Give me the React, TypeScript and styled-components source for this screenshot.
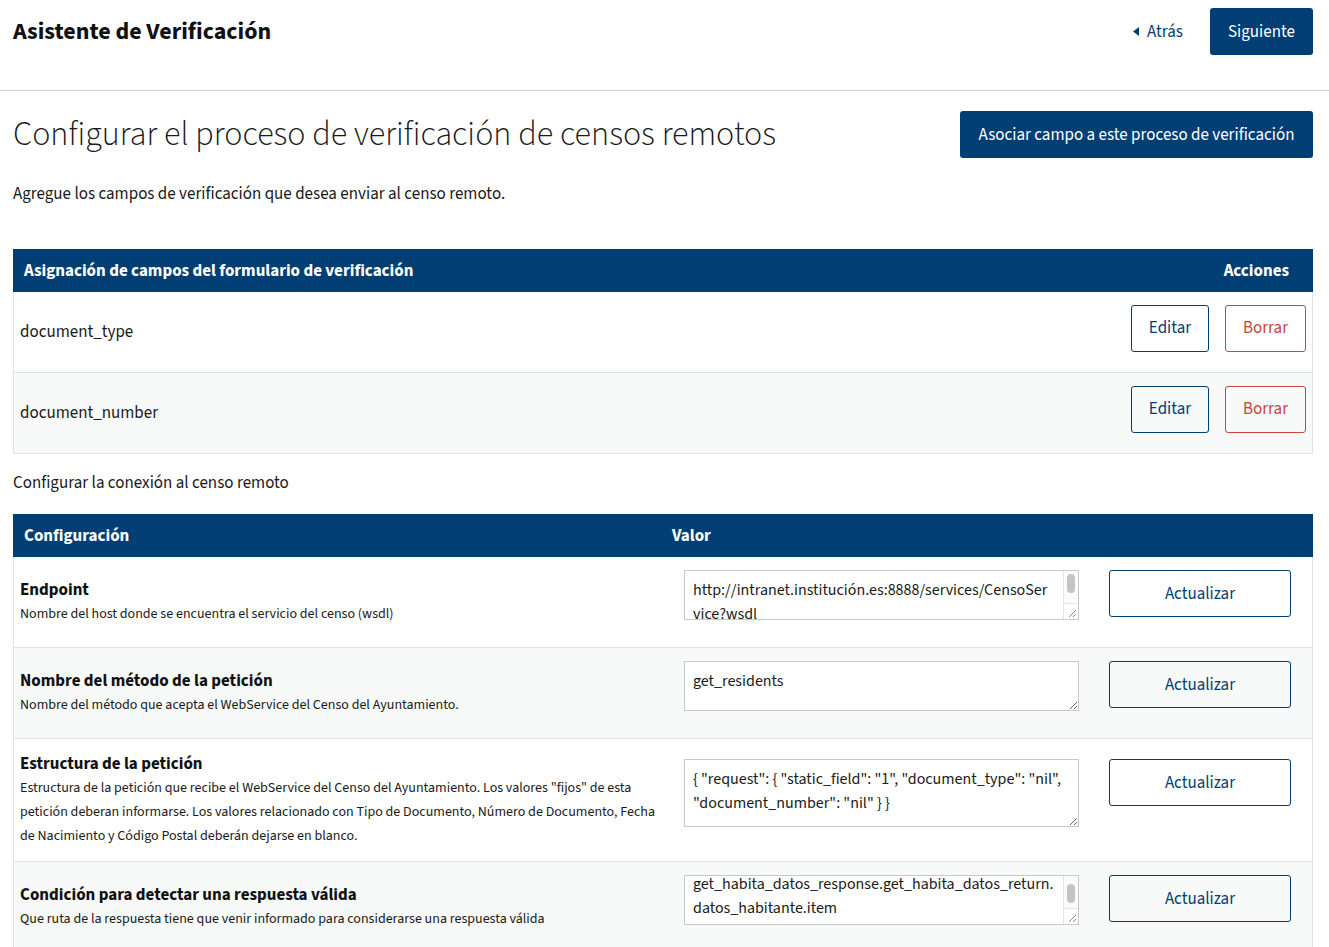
import React, { useEffect, useRef } from "react";
import styled, { createGlobalStyle } from "styled-components";

const BLUE = "#003e74";
const RED = "#c8473c";
const FONT = `"Source Sans Pro", "Source Sans 3", Lato, "Noto Sans", sans-serif`;

const Global = createGlobalStyle`
  html, body { margin: 0; padding: 0; background: #fff; }
  body { font-family: ${FONT}; color: #1a1a1a; }
  * { box-sizing: border-box; }
`;

const Header = styled.header`
  display: flex;
  align-items: center;
  justify-content: space-between;
  height: 91px;
  padding: 0 16px 27px 13px;
  border-bottom: 1px solid #cfcfcf;
`;

const Title = styled.h1`
  margin: 0;
  font-size: 24px;
  font-weight: 700;
  color: #111;
`;

const HeaderActions = styled.div`
  display: flex;
  align-items: center;
  gap: 27px;
`;

const BackLink = styled.a`
  display: flex;
  align-items: center;
  gap: 8px;
  color: ${BLUE};
  font-size: 17px;
  text-decoration: none;
`;

const SolidButton = styled.button<{ $w?: number }>`
  height: 47px;
  padding: 0 16px;
  background: ${BLUE};
  color: #fff;
  border: none;
  border-radius: 3px;
  font-family: ${FONT};
  font-size: 17px;
  white-space: nowrap;
  ${(p) => (p.$w ? `width: ${p.$w}px;` : "")}
`;

const Main = styled.main`
  padding: 20px 16px 0 13px;
`;

const TitleRow = styled.div`
  display: flex;
  justify-content: space-between;
  align-items: flex-start;
`;

const PageTitle = styled.h2`
  margin: 0;
  padding-top: 2px;
  font-size: 34px;
  line-height: 44px;
  font-weight: 300;
  color: #1a1a1a;
`;

const Lead = styled.p<{ $mt: number; $mb: number }>`
  margin: ${(p) => p.$mt}px 0 ${(p) => p.$mb}px;
  font-size: 17px;
  line-height: 24px;
  color: #1a1a1a;
`;

const Table = styled.div`
  width: 1300px;
  border-right: 1px solid #e1e3e3;
  border-left: 1px solid #e1e3e3;
`;

const HeadRow = styled.div<{ $cols: string }>`
  display: grid;
  grid-template-columns: ${(p) => p.$cols};
  align-items: center;
  height: 43px;
  background: ${BLUE};
  color: #fff;
  font-weight: 700;
  font-size: 17px;
  margin: 0 -1px;
`;

const HeadCell = styled.div<{ $align?: string; $pad: string }>`
  padding: ${(p) => p.$pad};
  text-align: ${(p) => p.$align || "left"};
`;

const Row = styled.div<{ $cols: string; $alt?: boolean; $h?: number }>`
  display: grid;
  grid-template-columns: ${(p) => p.$cols};
  align-items: center;
  ${(p) => (p.$h ? `min-height: ${p.$h}px;` : "")}
  background: ${(p) => (p.$alt ? "#f8f9f9" : "#fff")};
  border-bottom: 1px solid #e1e3e3;
`;

const NameCell = styled.div`
  padding: 0 6px;
  font-size: 17px;
`;

const ActionsCell = styled.div`
  display: flex;
  justify-content: flex-end;
  gap: 16px;
  padding: 0 6px 8px 0;
`;

const OutlineButton = styled.button<{ $danger?: boolean; $w: number }>`
  width: ${(p) => p.$w}px;
  height: 47px;
  background: transparent;
  border: 1px solid ${(p) => (p.$danger ? RED : BLUE)};
  color: ${(p) => (p.$danger ? RED : BLUE)};
  border-radius: 3px;
  font-family: ${FONT};
  font-size: 17px;
`;

const ConfigCell = styled.div`
  padding: 13px 6px;
`;

const ConfigLabel = styled.div`
  font-size: 17px;
  font-weight: 700;
  line-height: 24px;
  color: #111;
`;

const ConfigDesc = styled.div`
  font-size: 14px;
  line-height: 24px;
  color: #1a1a1a;
`;

const ValueCell = styled.div`
  display: flex;
  align-items: flex-start;
  gap: 30px;
  padding: 13px 21px 27px 22px;
`;

const AreaWrap = styled.div`
  position: relative;
  width: 395px;
  display: flex;
`;

const Area = styled.textarea<{ $h: number; $bar: boolean }>`
  width: 395px;
  height: ${(p) => p.$h}px;
  padding: 7px ${(p) => (p.$bar ? 23 : 8)}px 7px 8px;
  border: 1px solid #c9c9c9;
  border-radius: 0;
  font-family: ${FONT};
  font-size: 16px;
  line-height: 24px;
  color: #1a1a1a;
  background: #fff;
  resize: vertical;
  overflow: hidden;
  overflow-wrap: break-word;
`;

const Track = styled.div`
  position: absolute;
  top: 1px;
  right: 1px;
  bottom: 1px;
  width: 15px;
  border-left: 1px solid #e4e4e4;
  background: #fbfbfb;
  pointer-events: none;
  &::after {
    content: "";
    position: absolute;
    left: 0;
    right: 0;
    bottom: 0;
    height: 15px;
    border-top: 1px solid #e4e4e4;
    background: #fff;
  }
`;

const Thumb = styled.div<{ $top: number }>`
  position: absolute;
  top: ${(p) => p.$top}px;
  left: 3px;
  width: 8px;
  height: 19px;
  border-radius: 4px;
  background: #c4c4c4;
`;

const Grip = styled.svg`
  position: absolute;
  right: 2px;
  bottom: 2px;
  z-index: 1;
`;

const BackIcon = () => (
  <svg width="6" height="9" viewBox="0 0 6 9">
    <path d="M6 0 L0 4.5 L6 9 Z" fill={BLUE} />
  </svg>
);

type Cfg = { label: string; desc: string; value: string; h: number; scroll?: number; thumb?: number };

const configs: Cfg[] = [
  {
    label: "Endpoint",
    desc: "Nombre del host donde se encuentra el servicio del censo (wsdl)",
    value: "http://intranet.institución.es:8888/services/CensoService?wsdl",
    h: 50,
    scroll: 0,
    thumb: 3,
  },
  {
    label: "Nombre del método de la petición",
    desc: "Nombre del método que acepta el WebService del Censo del Ayuntamiento.",
    value: "get_residents",
    h: 50,
  },
  {
    label: "Estructura de la petición",
    desc:
      'Estructura de la petición que recibe el WebService del Censo del Ayuntamiento. Los valores "fijos" de esta petición deberan informarse. Los valores relacionado con Tipo de Documento, Número de Documento, Fecha de Nacimiento y Código Postal deberán dejarse en blanco.',
    value: '{ "request": { "static_field": "1", "document_type": "nil", "document_number": "nil" } }',
    h: 68,
  },
  {
    label: "Condición para detectar una respuesta válida",
    desc: "Que ruta de la respuesta tiene que venir informado para considerarse una respuesta válida",
    value: "get_habita_datos_response.get_habita_datos_return.datos_habitante.item",
    h: 50,
    scroll: 11,
    thumb: 8,
  },
];

const ConfigArea = ({ cfg }: { cfg: Cfg }) => {
  const ref = useRef<HTMLTextAreaElement>(null);
  const bar = cfg.thumb !== undefined;
  useEffect(() => {
    if (ref.current && cfg.scroll) ref.current.scrollTop = cfg.scroll;
  }, [cfg.scroll]);
  return (
    <AreaWrap>
      <Area ref={ref} $h={cfg.h} $bar={bar} defaultValue={cfg.value} />
      {bar && (
        <Track>
          <Thumb $top={cfg.thumb!} />
        </Track>
      )}
      {bar && (
        <Grip width="11" height="11" viewBox="0 0 11 11">
          <path d="M10 3 L3 10 M10 7 L7 10" stroke="#8a8a8a" strokeWidth="1" fill="none" />
        </Grip>
      )}
    </AreaWrap>
  );
};

const FIELD_COLS = "1fr auto";
const CONFIG_COLS = "648px 1fr";

export default function App() {
  return (
    <>
      <Global />
      <Header>
        <Title>Asistente de Verificación</Title>
        <HeaderActions>
          <BackLink href="#">
            <BackIcon />
            Atrás
          </BackLink>
          <SolidButton $w={103}>Siguiente</SolidButton>
        </HeaderActions>
      </Header>
      <Main>
        <TitleRow>
          <PageTitle>Configurar el proceso de verificación de censos remotos</PageTitle>
          <SolidButton $w={353}>Asociar campo a este proceso de verificación</SolidButton>
        </TitleRow>
        <Lead $mt={24} $mb={43}>Agregue los campos de verificación que desea enviar al censo remoto.</Lead>
        <Table>
          <HeadRow $cols={FIELD_COLS}>
            <HeadCell $pad="0 11px">Asignación de campos del formulario de verificación</HeadCell>
            <HeadCell $pad="0 24px 0 11px" $align="right">Acciones</HeadCell>
          </HeadRow>
          {["document_type", "document_number"].map((name, i) => (
            <Row key={name} $cols={FIELD_COLS} $alt={i % 2 === 1} $h={81}>
              <NameCell>{name}</NameCell>
              <ActionsCell>
                <OutlineButton $w={78}>Editar</OutlineButton>
                <OutlineButton $w={81} $danger>Borrar</OutlineButton>
              </ActionsCell>
            </Row>
          ))}
        </Table>
        <Lead $mt={17} $mb={19}>Configurar la conexión al censo remoto</Lead>
        <Table>
          <HeadRow $cols={CONFIG_COLS}>
            <HeadCell $pad="0 11px">Configuración</HeadCell>
            <HeadCell $pad="0 11px">Valor</HeadCell>
          </HeadRow>
          {configs.map((cfg, i) => (
            <Row key={cfg.label} $cols={CONFIG_COLS} $alt={i % 2 === 1}>
              <ConfigCell>
                <ConfigLabel>{cfg.label}</ConfigLabel>
                <ConfigDesc>{cfg.desc}</ConfigDesc>
              </ConfigCell>
              <ValueCell>
                <ConfigArea cfg={cfg} />
                <OutlineButton $w={182}>Actualizar</OutlineButton>
              </ValueCell>
            </Row>
          ))}
        </Table>
      </Main>
    </>
  );
}
